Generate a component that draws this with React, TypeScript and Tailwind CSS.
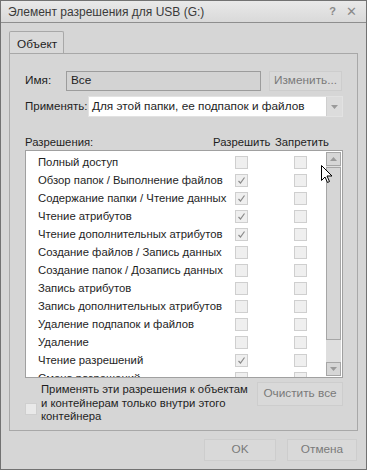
import React from "react";

interface Perm {
  name: string;
  allow: boolean;
}

const perms: Perm[] = [
  { name: "Полный доступ", allow: false },
  { name: "Обзор папок / Выполнение файлов", allow: true },
  { name: "Содержание папки / Чтение данных", allow: true },
  { name: "Чтение атрибутов", allow: true },
  { name: "Чтение дополнительных атрибутов", allow: true },
  { name: "Создание файлов / Запись данных", allow: false },
  { name: "Создание папок / Дозапись данных", allow: false },
  { name: "Запись атрибутов", allow: false },
  { name: "Запись дополнительных атрибутов", allow: false },
  { name: "Удаление подпапок и файлов", allow: false },
  { name: "Удаление", allow: false },
  { name: "Чтение разрешений", allow: true },
  { name: "Смена разрешений", allow: false },
];

function Box({ checked }: { checked?: boolean }) {
  return (
    <div className="w-[13px] h-[13px] shrink-0 border border-[#cfcfcf] bg-[#efefef] flex items-center justify-center">
      {checked && (
        <svg width="9" height="9" viewBox="0 0 9 9">
          <path d="M1.5 5 L3.5 7 L7.5 1.5" fill="none" stroke="#8a8a8a" strokeWidth="1.2" />
        </svg>
      )}
    </div>
  );
}

function Btn({ children, className = "" }: { children: React.ReactNode; className?: string }) {
  return (
    <div
      className={`flex items-center justify-center border border-[#cdcdcd] bg-[#d9d9d9] text-[#7a7a7a] text-[11.8px] shrink-0 ${className}`}
    >
      {children}
    </div>
  );
}

export default function App() {
  return (
    <div
      className="relative w-[367px] h-[470px] bg-[#d6d6d6] border border-[#727272] text-[11.3px] text-[#1e1e1e] flex flex-col overflow-hidden whitespace-nowrap"
      style={{ fontFamily: '"Liberation Sans", Arial, sans-serif' }}
    >
      {/* title bar */}
      <div className="h-[22px] shrink-0 bg-gradient-to-b from-[#e9e9e9] to-[#d9d9d9] border-b border-[#8e8e8e] flex items-center pl-[7px] pr-[9px]">
        <span className="text-[12px] text-[#3a3a3a]">Элемент разрешения для USB (G:)</span>
        <span className="ml-auto text-[11px] text-[#8a8a8a] font-bold">?</span>
        <span className="ml-[10px] text-[13px] text-[#8a8a8a]">✕</span>
      </div>

      <div className="flex-1 flex flex-col px-[8px] pt-[8px]">
        {/* tab strip */}
        <div className="flex h-[22px]">
          <div className="w-[55px] h-[22px] border border-b-0 border-[#a8a8a8] rounded-t-[2px] bg-[#d9d9d9] pl-[7px] pt-[4px] relative z-10 -mb-px text-[11.8px]">
            Объект
          </div>
        </div>

        {/* tab panel */}
        <div className="w-[349px] h-[378px] border border-[#a8a8a8] flex flex-col pl-[15px] pr-[14px] pt-[17px]">
          <div className="flex items-center h-[20px] text-[11.8px]">
            <span className="w-[41px]">Имя:</span>
            <div className="w-[195px] h-[20px] border border-[#9c9c9c] bg-[#d3d3d3] pl-[4px] flex items-center">Все</div>
            <Btn className="ml-[8px] w-[73px] h-[20px]">Изменить...</Btn>
          </div>

          <div className="flex items-center h-[21px] mt-[5px]">
            <span className="w-[63px] text-[11.5px]">Применять:</span>
            <div className="flex-1 h-[21px] bg-white border border-[#e2e2e2] flex items-center pl-[3px] text-[11.8px]">
              <span>Для этой папки, ее подпапок и файлов</span>
              <div className="ml-auto w-[16px] h-full bg-[#dcdcdc] border-l border-[#cfcfcf] flex items-center justify-center">
                <svg width="7" height="4" viewBox="0 0 7 4">
                  <path d="M0 0 L7 0 L3.5 4 Z" fill="#9a9a9a" />
                </svg>
              </div>
            </div>
          </div>

          <div className="flex h-[14px] mt-[18px] leading-[14px]">
            <span className="w-[188px]">Разрешения:</span>
            <span className="w-[62px]">Разрешить</span>
            <span>Запретить</span>
          </div>

          {/* permissions list */}
          <div className="mt-[1px] h-[228px] border border-[#a0a0a0] bg-white flex overflow-hidden">
            <div className="flex-1 pt-[2px] overflow-hidden">
              {perms.map((p) => (
                <div key={p.name} className="h-[18px] flex items-center shrink-0">
                  <span className="pl-[12px] w-[209px] overflow-hidden">{p.name}</span>
                  <Box checked={p.allow} />
                  <span className="w-[46px]" />
                  <Box />
                </div>
              ))}
            </div>
            <div className="w-[15px] mr-px my-px flex flex-col bg-[#dedede]">
              <div className="h-[14px] border border-[#a6a6a6] bg-[#d6d6d6] flex items-center justify-center">
                <svg width="7" height="4" viewBox="0 0 7 4">
                  <path d="M0 4 L7 4 L3.5 0 Z" fill="#9a9a9a" />
                </svg>
              </div>
              <div className="h-[173px] mt-px border border-[#a6a6a6] bg-[#d6d6d6]" />
              <div className="mt-auto h-[14px] border border-[#a6a6a6] bg-[#d6d6d6] flex items-center justify-center">
                <svg width="7" height="4" viewBox="0 0 7 4">
                  <path d="M0 0 L7 0 L3.5 4 Z" fill="#9a9a9a" />
                </svg>
              </div>
            </div>
          </div>

          <div className="flex mt-[4px]">
            <div className="w-[12px] h-[12px] border border-[#cfcfcf] bg-[#e9e9e9] mt-[21px] shrink-0" />
            <div className="ml-[4px] leading-[13.5px] pt-[1px]">
              Применять эти разрешения к объектам
              <br />
              и контейнерам только внутри этого
              <br />
              контейнера
            </div>
            <Btn className="ml-auto w-[86px] h-[24px]">Очистить все</Btn>
          </div>
        </div>

        <div className="flex justify-end gap-[11px] mt-[8px] pr-[1px]">
          <Btn className="w-[72px] h-[22px]">OK</Btn>
          <Btn className="w-[70px] h-[22px]">Отмена</Btn>
        </div>
      </div>

      {/* mouse cursor */}
      <svg className="absolute left-[320px] top-[164px]" width="12" height="19" viewBox="0 0 12 19">
        <path d="M0.5 0.5 L0.5 15.5 L4 12 L6.5 17.5 L8.5 16.5 L6 11 L11 11 Z" fill="#fff" stroke="#000" strokeWidth="1" />
      </svg>
    </div>
  );
}
